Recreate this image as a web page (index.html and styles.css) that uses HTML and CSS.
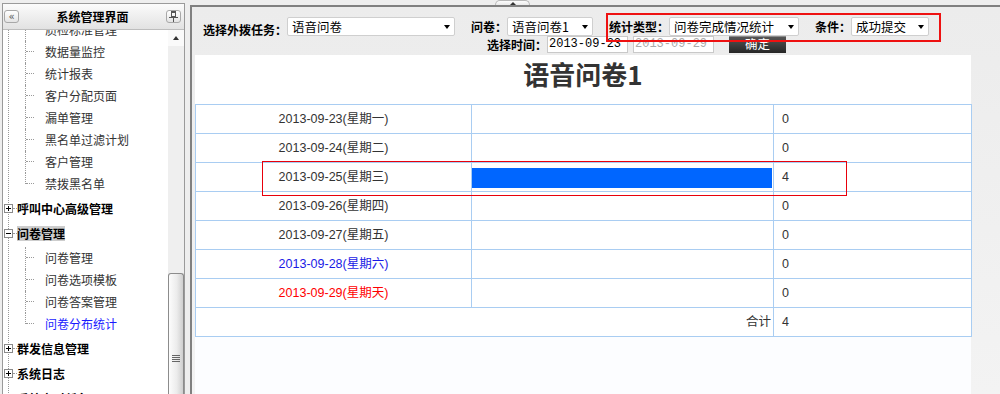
FILE: index.html
```html
<!DOCTYPE html>
<html lang="zh-CN">
<head>
<meta charset="utf-8">
<title>问卷分布统计</title>
<link rel="stylesheet" href="styles.css">
</head>
<body>
<div class="page">
  <aside class="sidebar">
    <div class="side-head">
      <span class="hbtn">«</span>
      <span class="side-title">系统管理界面</span>
      <span class="hbtn">
        <svg width="9" height="11" viewBox="0 0 9 11">
          <rect x="2" y="0" width="5" height="1" fill="#555"/>
          <rect x="2.5" y="1.5" width="4" height="4" fill="none" stroke="#555" stroke-width="1"/>
          <rect x="0" y="6" width="9" height="1" fill="#555"/>
          <rect x="4" y="7" width="1" height="4" fill="#555"/>
        </svg>
      </span>
    </div>
    <div class="side-body">
      <div class="tree-wrap">
        <ul class="tree">
          <li>
            <ul class="children">
              <li class="leaf"><span class="conn"></span><span class="txt">质检标准管理</span></li>
              <li class="leaf"><span class="conn"></span><span class="txt">数据量监控</span></li>
              <li class="leaf"><span class="conn"></span><span class="txt">统计报表</span></li>
              <li class="leaf"><span class="conn"></span><span class="txt">客户分配页面</span></li>
              <li class="leaf"><span class="conn"></span><span class="txt">漏单管理</span></li>
              <li class="leaf"><span class="conn"></span><span class="txt">黑名单过滤计划</span></li>
              <li class="leaf"><span class="conn"></span><span class="txt">客户管理</span></li>
              <li class="leaf"><span class="conn"></span><span class="txt">禁拨黑名单</span></li>
            </ul>
          </li>
          <li><div class="prow"><span class="tog plus"></span><span class="dash"></span><span class="ptxt">呼叫中心高级管理</span></div></li>
          <li>
            <div class="prow on"><span class="tog minus"></span><span class="dash"></span><span class="ptxt">问卷管理</span></div>
            <ul class="children">
              <li class="leaf"><span class="conn"></span><span class="txt">问卷管理</span></li>
              <li class="leaf"><span class="conn"></span><span class="txt">问卷选项模板</span></li>
              <li class="leaf"><span class="conn"></span><span class="txt">问卷答案管理</span></li>
              <li class="leaf cur"><span class="conn"></span><span class="txt">问卷分布统计</span></li>
            </ul>
          </li>
          <li><div class="prow"><span class="tog plus"></span><span class="dash"></span><span class="ptxt">群发信息管理</span></div></li>
          <li><div class="prow"><span class="tog plus"></span><span class="dash"></span><span class="ptxt">系统日志</span></div></li>
          <li><div class="prow"><span class="tog plus"></span><span class="dash"></span><span class="ptxt">系统定时任务</span></div></li>
        </ul>
      </div>
      <div class="vscroll">
        <div class="sarrow"></div>
        <div class="strack"></div>
        <div class="sthumb"><div class="grip"></div></div>
      </div>
    </div>
  </aside>

  <main class="main">
    <div class="topstrip"><div class="tab"></div></div>
    <div class="frame">
      <div class="row1">
        <div class="grp">
          <span class="lb low">选择外拨任务：</span>
          <div class="dd w-task"><span>语音问卷</span><i class="caret"></i></div>
        </div>
        <div class="grp">
          <span class="lb">问卷：</span>
          <div class="dd w-paper"><span>语音问卷1</span><i class="caret"></i></div>
        </div>
        <div class="grp">
          <span class="lb">统计类型：</span>
          <div class="dd w-type"><span>问卷完成情况统计</span><i class="caret"></i></div>
        </div>
        <div class="grp">
          <span class="lb">条件：</span>
          <div class="dd w-cond"><span>成功提交</span><i class="caret"></i></div>
        </div>
      </div>
      <div class="row2">
        <span class="lb">选择时间：</span>
        <span class="inp">2013-09-23</span>
        <span class="inp dim">2013-09-29</span>
        <span class="btn">确定</span>
      </div>
      <div class="mark mark-tools"></div>

      <section class="panel">
        <h1 class="title">语音问卷1</h1>
        <table class="stat">
          <colgroup><col class="c1"><col class="c2"><col class="c3"></colgroup>
          <tbody>
            <tr><td class="day">2013-09-23(星期一)</td><td class="barcell"></td><td class="num">0</td></tr>
            <tr><td class="day">2013-09-24(星期二)</td><td class="barcell"></td><td class="num">0</td></tr>
            <tr><td class="day">2013-09-25(星期三)</td><td class="barcell"><div class="bar" style="width:100%"></div></td><td class="num">4</td></tr>
            <tr><td class="day">2013-09-26(星期四)</td><td class="barcell"></td><td class="num">0</td></tr>
            <tr><td class="day">2013-09-27(星期五)</td><td class="barcell"></td><td class="num">0</td></tr>
            <tr><td class="day sat">2013-09-28(星期六)</td><td class="barcell"></td><td class="num">0</td></tr>
            <tr><td class="day sun">2013-09-29(星期天)</td><td class="barcell"></td><td class="num">0</td></tr>
            <tr><td class="total" colspan="2">合计</td><td class="num">4</td></tr>
          </tbody>
        </table>
        <div class="mark mark-row"></div>
      </section>
    </div>
  </main>
</div>
</body>
</html>
```

FILE: styles.css
```css
* { box-sizing: border-box; }
html, body { margin: 0; padding: 0; }
body {
  width: 1000px;
  height: 394px;
  overflow: hidden;
  background: #eeeeee;
  font-family: "Noto Sans CJK SC", "Liberation Sans", sans-serif;
  font-size: 12px;
  color: #000;
}
.page { display: flex; height: 394px; }

/* ---------- sidebar ---------- */
.sidebar {
  width: 183px;
  margin: 3px 0 0 2px;
  border: 1px solid #9a9a9a;
  border-bottom: none;
  background: #fff;
  display: flex;
  flex-direction: column;
  min-height: 0;
}
.side-head {
  height: 26px;
  flex: none;
  display: flex;
  align-items: center;
  padding: 0 3px 0 1px;
  background: linear-gradient(#fbfbfb, #e2e2e2);
  border-bottom: 1px solid #bdbdbd;
}
.hbtn {
  width: 15px;
  height: 13px;
  flex: none;
  border: 1px solid #a8a8a8;
  border-radius: 3px;
  background: linear-gradient(#ffffff, #e4e4e4);
  display: flex;
  align-items: center;
  justify-content: center;
  font: 10px/11px "DejaVu Sans", sans-serif;
  color: #555;
}
.side-title {
  flex: 1;
  text-align: center;
  font-weight: bold;
  font-size: 12px;
  line-height: 16px;
}
.side-body { flex: 1; display: flex; min-height: 0; }
.tree-wrap { width: 165px; overflow: hidden; }

.tree {
  list-style: none;
  margin: -12px 0 0 5px;
  padding: 0;
  border-left: 1px dotted #9a9a9a;
}
.children {
  list-style: none;
  margin: 0 0 0 16px;
  padding: 1px 0;
}
.leaf { display: flex; height: 22px; }
.conn {
  width: 9px;
  flex: none;
  border-left: 1px dotted #9a9a9a;
}
.conn::after {
  content: "";
  display: block;
  margin-top: 10px;
  border-top: 1px dotted #9a9a9a;
}
.leaf:last-child .conn { height: 11px; }
.leaf .txt {
  margin-left: 11px;
  line-height: 22px;
  color: #333;
  white-space: nowrap;
}
.leaf.cur .txt { color: #1a1aff; }

.prow { display: flex; align-items: center; height: 25px; }
.tog {
  width: 9px;
  height: 9px;
  flex: none;
  margin-left: -5px;
  border: 1px solid #8a8a8a;
}
.tog.plus {
  background:
    linear-gradient(#000, #000) center / 5px 1px no-repeat,
    linear-gradient(#000, #000) center / 1px 5px no-repeat,
    #fff;
}
.tog.minus {
  background:
    linear-gradient(#000, #000) center / 5px 1px no-repeat,
    #fff;
}
.dash { width: 4px; flex: none; border-top: 1px dotted #9a9a9a; }
.ptxt { font-weight: bold; line-height: 15px; white-space: nowrap; }
.prow.on .ptxt { background: #cdcdcd; }

.vscroll {
  width: 16px;
  flex: none;
  display: flex;
  flex-direction: column;
  background: #efefef;
}
.sarrow {
  height: 16px;
  flex: none;
  display: flex;
  align-items: center;
  justify-content: center;
  background: #fafafa;
}
.sarrow::after {
  content: "";
  border-left: 3.5px solid transparent;
  border-right: 3.5px solid transparent;
  border-bottom: 4px solid #333;
}
.strack { height: 227px; flex: none; }
.sthumb {
  flex: 1;
  border: 1px solid #8c8c8c;
  border-bottom: none;
  border-radius: 3px 3px 0 0;
  background: linear-gradient(to right, #fcfcfc, #ececec 55%, #cfcfcf);
  padding-top: 81px;
  display: flex;
  justify-content: center;
}
.grip {
  width: 8px;
  height: 8px;
  background: repeating-linear-gradient(#666 0 1px, transparent 1px 2px);
}

/* ---------- main ---------- */
.main {
  flex: 1;
  margin-left: 5px;
  display: flex;
  flex-direction: column;
  min-width: 0;
}
.topstrip { height: 5px; flex: none; display: flex; padding-left: 305px; }
.tab {
  width: 35px;
  height: 5px;
  border: 1px solid #b8b8b8;
  border-bottom: none;
  border-radius: 7px 7px 0 0;
  background: linear-gradient(#fdfdfd, #e9e9e9);
  display: flex;
  justify-content: center;
  align-items: center;
}
.tab::after {
  content: "";
  border-left: 3px solid transparent;
  border-right: 3px solid transparent;
  border-bottom: 3px solid #333;
}
.frame {
  flex: 1;
  position: relative;
  display: flex;
  flex-direction: column;
  min-height: 0;
  border-top: 2px solid #808080;
  border-left: 2px solid #808080;
  background: linear-gradient(#ececec, #f3f3f3);
}

.row1 {
  display: flex;
  height: 19px;
  margin-top: 10px;
  padding-left: 11px;
  flex: none;
}
.grp { display: flex; margin-right: 16px; }
.lb {
  font-weight: bold;
  font-size: 12px;
  line-height: 19px;
  white-space: nowrap;
}
.lb.low { margin-top: 3px; }
.dd {
  height: 19px;
  display: flex;
  align-items: center;
  justify-content: space-between;
  padding: 0 4px 0 4px;
  background: #fff;
  border: 1px solid #cfcfcf;
  border-radius: 2px;
  font-size: 12.5px;
  line-height: 17px;
  white-space: nowrap;
}
.caret {
  width: 0;
  height: 0;
  border-left: 3.5px solid transparent;
  border-right: 3.5px solid transparent;
  border-top: 4px solid #000;
}
.w-task { width: 168px; }
.w-paper { width: 86px; }
.w-type { width: 130px; }
.w-cond { width: 78px; }

.row2 {
  display: flex;
  align-items: center;
  height: 17px;
  margin-left: 295px;
  flex: none;
}
.inp {
  width: 81px;
  height: 17px;
  margin-left: 0;
  padding-left: 1px;
  border: 1px solid #c9c9c9;
  background: #fff;
  font: 12px/15px "Liberation Mono", monospace;
  color: #000;
}
.inp + .inp { margin-left: 5px; }
.inp.dim { color: #aaaaaa; }
.btn {
  width: 57px;
  height: 17px;
  margin-left: 15px;
  border-top: 1px solid #8a8a8a;
  background: linear-gradient(#555555, #262626);
  color: #fff;
  font-size: 12.5px;
  line-height: 13px;
  text-align: center;
}

.mark { position: absolute; pointer-events: none; }
.mark-tools {
  left: 414px;
  top: 6px;
  width: 335px;
  height: 29px;
  border: 2px solid #ee1111;
}

.panel {
  position: relative;
  flex: 1;
  width: 776px;
  margin: 2px 0 0 3px;
  background: #fcfdff;
}
.title {
  margin: 0;
  height: 49px;
  padding-top: 0;
  background: #fff;
  text-align: center;
  font-size: 26px;
  font-weight: bold;
  line-height: 37px;
  color: #333;
}
.stat {
  width: 776px;
  border-collapse: collapse;
  table-layout: fixed;
  background: #fff;
}
.c1 { width: 276px; }
.c2 { width: 302px; }
.c3 { width: 198px; }
.stat td {
  border: 1px solid #a9cdf2;
  padding: 0;
  font-family: "Liberation Sans", "Noto Sans CJK SC", sans-serif;
  font-size: 12.5px;
  line-height: 28px;
  color: #333;
  white-space: nowrap;
}
.stat td.day { text-align: center; }
.stat td.sat { color: #1a1ae6; }
.stat td.sun { color: #ff0000; }
.stat td.num { padding-left: 8px; }
.stat td.total { text-align: right; padding-right: 2px; }
.stat td.barcell { vertical-align: top; padding-right: 1px; }
.bar { height: 20px; margin-top: 5px; background: #0066ff; }

.mark-row {
  left: 67px;
  top: 106px;
  width: 585px;
  height: 35px;
  border: 1px solid #e8000b;
}
```
